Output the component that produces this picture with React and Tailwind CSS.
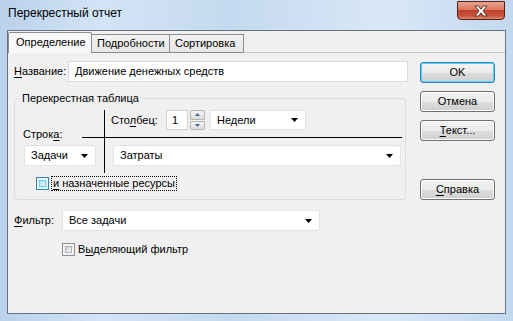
import React from "react";

const Arrow = () => (
  <svg width="7" height="4" viewBox="0 0 7 4" className="shrink-0">
    <path d="M0 0h7L3.5 4z" fill="#000" />
  </svg>
);

const Combo = ({ text, className }) => (
  <div className={`flex items-center justify-between bg-white border border-[#e3e3e3] rounded-[2px] pl-[6px] pr-[7px] ${className}`}>
    <span className="leading-[15px]">{text}</span>
    <Arrow />
  </div>
);

const Btn = ({ children, def, className = "" }) => (
  <div
    className={`w-[75px] h-[21px] rounded-[3px] border flex items-center justify-center leading-[15px] ${
      def
        ? "border-[#3c7fb1] shadow-[inset_0_0_0_1px_#48d8fb]"
        : "border-[#707070] shadow-[inset_0_0_0_1px_#fcfcfc]"
    } bg-[linear-gradient(#f2f2f2_0%,#ebebeb_50%,#dddddd_51%,#cfcfcf_100%)] ${className}`}
  >
    {children}
  </div>
);

const U = ({ children }) => <span className="underline underline-offset-2">{children}</span>;

export default function App() {
  return (
    <div
      className="w-[513px] h-[321px] flex flex-col bg-[linear-gradient(90deg,#b9d1ea_0%,#d3e4f6_20%,#c4d9ef_45%,#d9e8f7_75%,#c2d8ef_100%)] text-[11px] text-black"
      style={{ fontFamily: '"Liberation Sans", Arial, sans-serif' }}
    >
      {/* title bar */}
      <div className="h-[30px] flex items-start shrink-0">
        <div className="pl-[8px] pt-[6px] leading-[15px] text-[12px] text-[#000]">Перекрестный отчет</div>
        <div className="ml-auto mr-[8px] mt-[1px] w-[48px] h-[19px] rounded-b-[4px] border border-[#5a1f14] bg-[linear-gradient(#e8a492_0%,#d9775f_45%,#c3412a_50%,#c8503a_80%,#dc8a70_100%)] flex items-center justify-center">
          <svg width="16" height="12" viewBox="0 0 16 12">
            <path
              d="M2 1h3.5L8 4.2 10.5 1H14l-4 5 4 5h-3.5L8 7.8 5.5 11H2l4-5z"
              fill="#fff"
              stroke="#5b3a36"
              strokeWidth="1"
              strokeLinejoin="round"
            />
          </svg>
        </div>
      </div>

      {/* client */}
      <div className="mx-[7px] h-[284px] border border-[#69727c] bg-[#f0f0f0] flex flex-col">
        {/* tab strip */}
        <div className="h-[22px] flex items-end border-b border-[#c9c9c9] shrink-0">
          <div className="w-[84px] h-[21px] -mb-px bg-[#f7f7f7] border border-b-0 border-[#898c95] pl-[7px] pt-[2px] leading-[15px] rounded-t-[2px]">
            Определение
          </div>
          <div className="w-[78px] h-[19px] -mb-px border border-l-0 border-[#898c95] bg-[linear-gradient(#f3f3f3,#e6e6e6)] pl-[5px] leading-[17px]">
            Подробности
          </div>
          <div className="w-[74px] h-[19px] -mb-px border border-l-0 border-[#898c95] bg-[linear-gradient(#f3f3f3,#e6e6e6)] pl-[5px] leading-[17px]">
            Сортировка
          </div>
        </div>

        {/* page */}
        <div className="flex flex-1">
          {/* left column */}
          <div className="ml-[6px] w-[394px] flex flex-col">
            <div className="mt-[8px] flex items-center h-[21px]">
              <div className="w-[54px] leading-[15px]">
                <U>Н</U>азвание:
              </div>
              <div className="w-[340px] h-[21px] bg-white border border-[#dadada] flex items-center pl-[6px] leading-[15px]">
                Движение денежных средств
              </div>
            </div>

            <fieldset className="mt-[9px] w-[392px] h-[109px] border border-[#d5dfe5] rounded-[3px] min-w-0">
              <legend className="ml-[5px] px-[2px] leading-[15px]">Перекрестная таблица</legend>
              <div className="pt-[4px] flex">
                {/* left part */}
                <div className="w-[89px] flex flex-col">
                  <div className="h-[28px] flex items-end">
                    <div className="flex-1 pl-[8px] leading-[15px] -mb-[4px]">
                      Строк<U>а</U>:
                    </div>
                    <div className="w-[22px] border-b border-black"></div>
                  </div>
                  <Combo text="Задачи" className="mt-[7px] ml-[9px] w-[72px] h-[21px]" />
                </div>
                {/* right part */}
                <div className="w-[298px] border-l border-black flex flex-col">
                  <div className="h-[28px] border-b border-black">
                    <div className="flex items-center h-[20px]">
                      <div className="pl-[6px] w-[61px] leading-[15px]">
                        Сто<U>л</U>бец:
                      </div>
                      <div className="w-[22px] h-[20px] bg-white border border-[#cfcfcf] flex items-center pl-[5px] leading-[15px]">
                        1
                      </div>
                      <div className="ml-[2px] w-[15px] h-[20px] flex flex-col gap-px">
                        <div className="flex-1 rounded-t-[2px] border border-[#b5b5b5] bg-[linear-gradient(#f4f4f4,#dcdcdc)] flex items-center justify-center">
                          <svg width="5" height="3" viewBox="0 0 5 3">
                            <path d="M0 3h5L2.5 0z" fill="#4a6a8e" />
                          </svg>
                        </div>
                        <div className="flex-1 rounded-b-[2px] border border-[#b5b5b5] bg-[linear-gradient(#f4f4f4,#dcdcdc)] flex items-center justify-center">
                          <svg width="5" height="3" viewBox="0 0 5 3">
                            <path d="M0 0h5L2.5 3z" fill="#4a6a8e" />
                          </svg>
                        </div>
                      </div>
                      <Combo text="Недели" className="ml-[5px] w-[96px] h-[20px]" />
                    </div>
                  </div>
                  <Combo text="Затраты" className="mt-[7px] ml-[8px] w-[288px] h-[21px] mb-[7px]" />
                </div>
              </div>
              <div className="mt-[3px] ml-[21px] flex items-center h-[15px]">
                <div className="w-[13px] h-[13px] border border-[#3c7fb1] bg-[#def9fa] p-[2px]">
                  <div className="w-full h-full bg-[linear-gradient(135deg,#b1dffd,#e9f7fe)] border border-[#79c6f9]"></div>
                </div>
                <div className="ml-[2px] h-[15px] px-[1px] border border-dotted border-black leading-[13px]">
                  <U>и</U> назначенные ресурсы
                </div>
              </div>
            </fieldset>

            <div className="mt-[10px] flex items-center h-[21px]">
              <div className="w-[48px] leading-[15px]">
                <U>Ф</U>ильтр:
              </div>
              <Combo text="Все задачи" className="w-[258px] h-[21px]" />
            </div>

            <div className="mt-[11px] ml-[48px] flex items-center h-[14px]">
              <div className="w-[13px] h-[13px] border border-[#8e8f8f] bg-[#f4f4f4] p-[2px]">
                <div className="w-full h-full bg-[linear-gradient(135deg,#cbcfd5,#f6f6f6)] border border-[#aeb3b9]"></div>
              </div>
              <div className="ml-[3px] leading-[15px]">
                В<U>ы</U>деляющий фильтр
              </div>
            </div>
          </div>

          {/* right column */}
          <div className="ml-[12px] w-[75px] flex flex-col">
            <Btn def className="mt-[9px]">OK</Btn>
            <Btn className="mt-[8px]">Отмена</Btn>
            <Btn className="mt-[8px]">
              <span>
                <U>Т</U>екст...
              </span>
            </Btn>
            <Btn className="mt-[38px]">
              <span>
                <U>С</U>правка
              </span>
            </Btn>
          </div>
        </div>
      </div>
    </div>
  );
}
